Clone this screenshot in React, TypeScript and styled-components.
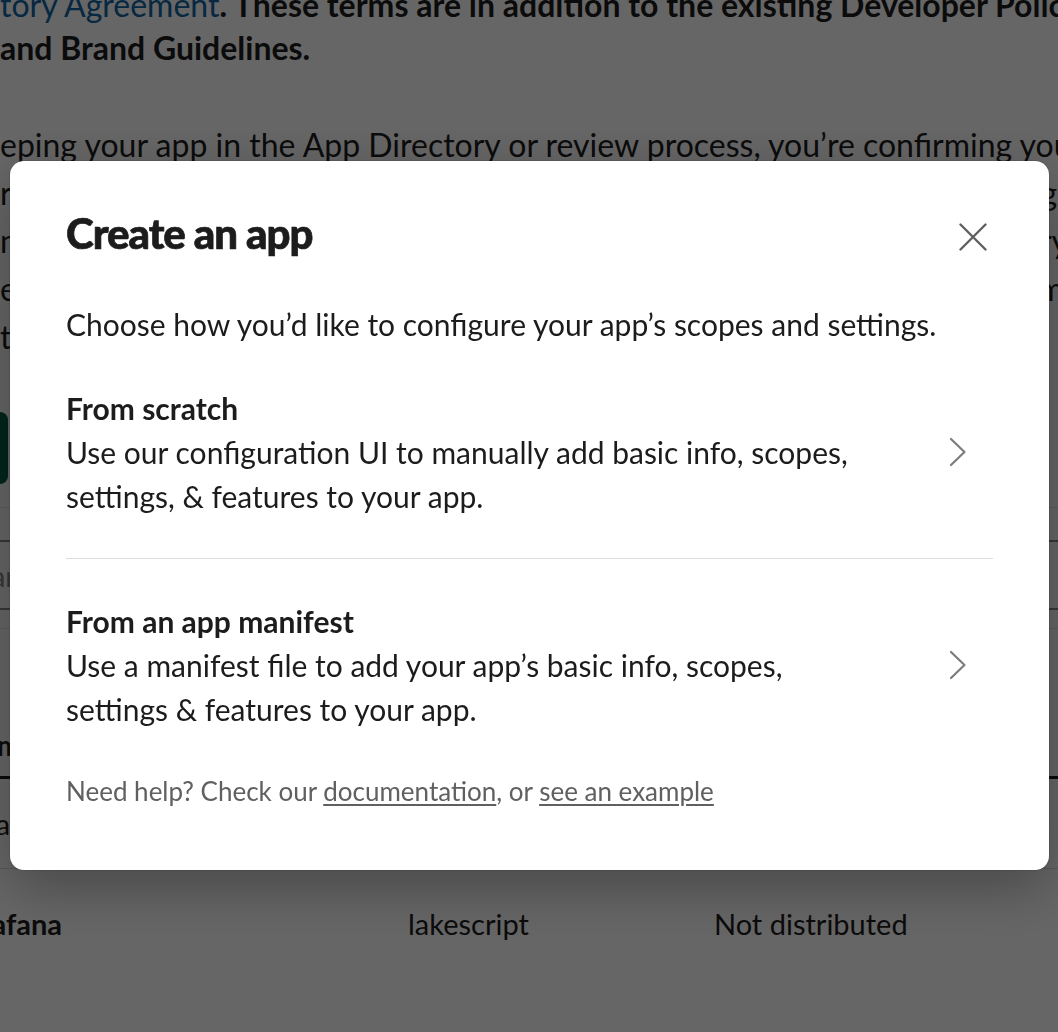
import React from "react";
import styled, { createGlobalStyle } from "styled-components";

const GlobalStyle = createGlobalStyle`
  html, body {
    margin: 0;
    padding: 0;
    background: #ffffff;
  }
  body {
    font-family: Lato, "Noto Sans", "Liberation Sans", sans-serif;
    color: #1d1c1d;
    -webkit-font-smoothing: antialiased;
  }
`;

/* ---------- background page ---------- */

const Page = styled.div`
  position: relative;
  width: 1058px;
  height: 1032px;
  overflow: hidden;
  background: #ffffff;
`;

const Article = styled.div`
  display: flex;
  flex-direction: column;
`;

const Paragraph = styled.div<{ $top: number; $lh: number }>`
  margin-top: ${(p) => p.$top}px;
  font-size: 32px;
  line-height: ${(p) => p.$lh}px;
`;

const Line = styled.div<{ $bold?: boolean }>`
  white-space: nowrap;
  font-weight: ${(p) => (p.$bold ? 700 : 400)};
`;

const TermsLink = styled.span`
  color: #1264a3;
  font-weight: 400;
`;

const Strong = styled.span`
  font-weight: 700;
`;

const ButtonRow = styled.div`
  margin-top: 51px;
  margin-left: -260px;
  display: flex;
`;

const GreenButton = styled.div`
  height: 72px;
  padding: 0 36px;
  display: flex;
  align-items: center;
  background: #005c44;
  color: #ffffff;
  border-radius: 8px;
  font-weight: 700;
  font-size: 28px;
`;

const Rule = styled.div<{ $top: number; $color: string }>`
  margin-top: ${(p) => p.$top}px;
  height: 1px;
  background: ${(p) => p.$color};
`;

const SearchBox = styled.div`
  margin-top: 32px;
  margin-left: -60px;
  height: 70px;
  box-sizing: border-box;
  border-top: 2px solid #8a8a8a;
  border-bottom: 2px solid #8a8a8a;
  display: flex;
  align-items: center;
  padding-left: 20px;
  color: #8a8a8a;
  font-size: 29px;
`;

const Table = styled.div`
  margin-left: -40px;
  display: flex;
  flex-direction: column;
`;

const TableRow = styled.div<{ $height: number; $header?: boolean; $border: string }>`
  display: grid;
  grid-template-columns: 448px 306px 1fr;
  height: ${(p) => p.$height}px;
  align-items: ${(p) => (p.$header ? "end" : "center")};
  padding-bottom: ${(p) => (p.$header ? 9 : 0)}px;
  box-sizing: border-box;
  border-bottom: ${(p) => p.$border};
  line-height: 44px;
  font-size: 29px;
`;

const Cell = styled.div<{ $bold?: boolean }>`
  font-weight: ${(p) => (p.$bold ? 700 : 400)};
  white-space: nowrap;
`;

/* ---------- modal ---------- */

const Overlay = styled.div`
  position: fixed;
  inset: 0;
  background: rgba(0, 0, 0, 0.6);
  display: flex;
  align-items: flex-start;
  padding: 161px 0 0 10px;
`;

const Modal = styled.div`
  width: 1039px;
  box-sizing: border-box;
  padding: 44px 56px 59px 56px;
  background: #ffffff;
  border-radius: 14px;
  box-shadow: 0 0 0 1px rgba(29, 28, 29, 0.13), 0 18px 56px 0 rgba(0, 0, 0, 0.3);
  color: #1d1c1d;
`;

const Header = styled.div`
  display: flex;
  align-items: center;
  justify-content: space-between;
  height: 56px;
`;

const Title = styled.h1`
  margin: 0;
  font-size: 42px;
  line-height: 56px;
  font-weight: 900;
  letter-spacing: -1px;
  -webkit-text-stroke: 0.7px #1d1c1d;
`;

const CloseButton = styled.button`
  width: 56px;
  height: 56px;
  margin: 8px -8px 0 0;
  padding: 0;
  border: 0;
  background: none;
  display: flex;
  align-items: center;
  justify-content: center;
  cursor: pointer;
`;

const Subtitle = styled.p`
  margin: 41px 0 0;
  font-size: 30px;
  line-height: 44px;
`;

const Options = styled.div`
  display: flex;
  flex-direction: column;
`;

const Option = styled.div`
  display: flex;
  align-items: center;
  padding: 40px 0;
  cursor: pointer;
  & + & {
    border-top: 1px solid #dddddd;
  }
`;

const OptionText = styled.div`
  flex: 0 0 800px;
  font-size: 30px;
  line-height: 44px;
`;

const OptionTitle = styled.div`
  font-weight: 700;
`;

const Chevron = styled.svg`
  margin-left: auto;
  margin-right: 26px;
  flex: none;
`;

const Footer = styled.p`
  margin: 0;
  font-size: 26px;
  line-height: 40px;
  color: #616061;
`;

const FooterLink = styled.a`
  color: #616061;
  text-decoration: underline;
  text-underline-offset: 3px;
`;

const ChevronIcon = () => (
  <Chevron width="18" height="30" viewBox="0 0 18 30" fill="none">
    <polyline
      points="2,2 15.5,15 2,28"
      stroke="#7c7c7c"
      strokeWidth="2.2"
      strokeLinecap="round"
      strokeLinejoin="round"
    />
  </Chevron>
);

export default function App() {
  return (
    <>
      <GlobalStyle />
      <Page>
        <Article>
          <Paragraph $top={-17} $lh={43}>
            <Line $bold>
              <TermsLink>tory Agreement</TermsLink>
              <Strong>. These terms are in addition to the existing Developer Policy</Strong>
            </Line>
            <Line $bold>and Brand Guidelines.</Line>
          </Paragraph>
          <Paragraph $top={52} $lh={48}>
            <Line>eping your app in the App Directory or review process, you’re confirming your</Line>
            <Line>responsibility to follow these terms, and you agree to keep your app’s listing</Line>
            <Line>maintained, your privacy policy current, and support pages available to everyone</Line>
            <Line>expecting help. Apps that no longer meet these terms may be removed from the</Line>
            <Line>the directory after notice.</Line>
          </Paragraph>
          <ButtonRow>
            <GreenButton>Accept and sign</GreenButton>
          </ButtonRow>
          <Rule $top={23} $color="#e8e8e8" />
          <SearchBox>Search for apps</SearchBox>
          <Rule $top={18} $color="#e8e8e8" />
          <Table>
            <TableRow $height={150} $header $border="3px solid #1d1c1d">
              <Cell $bold>Name</Cell>
              <Cell $bold>Workspace</Cell>
              <Cell $bold>Distribution Status</Cell>
            </TableRow>
            <TableRow $height={90} $border="1px solid #dddddd">
              <Cell>Ana</Cell>
              <Cell>lakescript</Cell>
              <Cell>Not distributed</Cell>
            </TableRow>
            <TableRow $height={110} $border="none">
              <Cell $bold>Grafana</Cell>
              <Cell>lakescript</Cell>
              <Cell>Not distributed</Cell>
            </TableRow>
          </Table>
        </Article>

        <Overlay>
          <Modal role="dialog" aria-label="Create an app">
            <Header>
              <Title>Create an app</Title>
              <CloseButton aria-label="Close">
                <svg width="28" height="28" viewBox="0 0 28 28" fill="none">
                  <path
                    d="M1.5 1.5 L26.5 26.5 M26.5 1.5 L1.5 26.5"
                    stroke="#616061"
                    strokeWidth="2.4"
                    strokeLinecap="round"
                  />
                </svg>
              </CloseButton>
            </Header>
            <Subtitle>Choose how you’d like to configure your app’s scopes and settings.</Subtitle>
            <Options>
              <Option>
                <OptionText>
                  <OptionTitle>From scratch</OptionTitle>
                  Use our configuration UI to manually add basic info, scopes, settings, &amp; features
                  to your app.
                </OptionText>
                <ChevronIcon />
              </Option>
              <Option>
                <OptionText>
                  <OptionTitle>From an app manifest</OptionTitle>
                  Use a manifest file to add your app’s basic info, scopes, settings &amp; features to
                  your app.
                </OptionText>
                <ChevronIcon />
              </Option>
            </Options>
            <Footer>
              Need help? Check our <FooterLink href="#">documentation</FooterLink>, or{" "}
              <FooterLink href="#">see an example</FooterLink>
            </Footer>
          </Modal>
        </Overlay>
      </Page>
    </>
  );
}
